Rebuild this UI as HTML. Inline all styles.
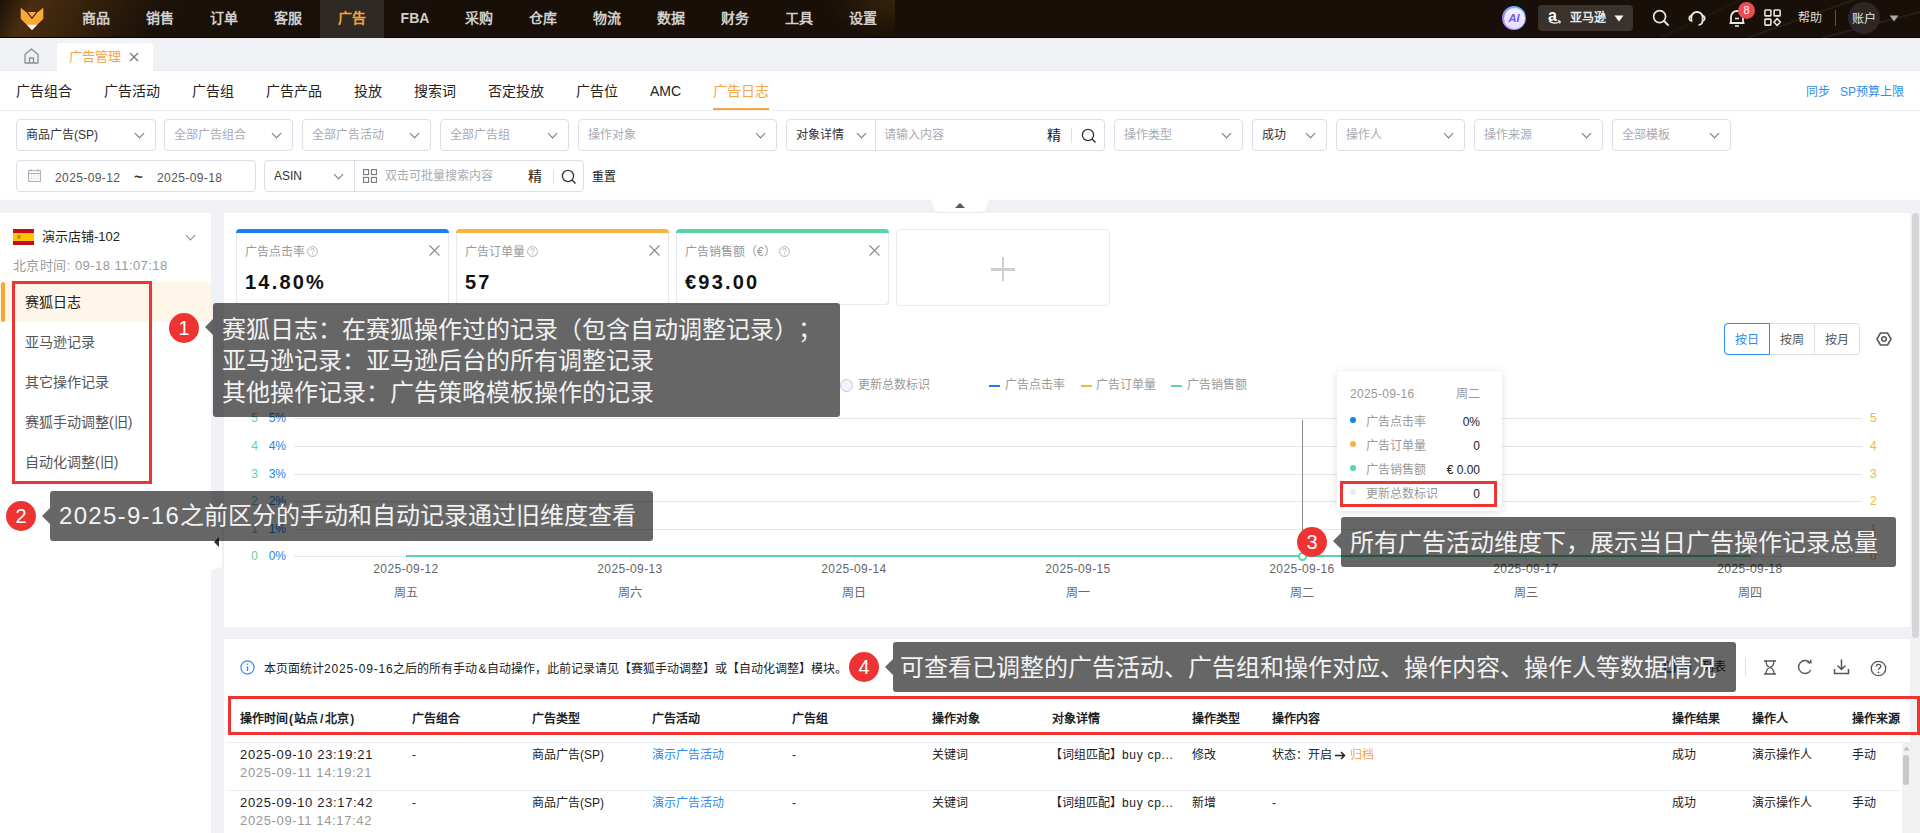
<!DOCTYPE html>
<html lang="zh-CN"><head><meta charset="utf-8">
<style>
*{margin:0;padding:0;box-sizing:border-box}
html,body{text-spacing-trim:space-all;width:1920px;height:833px;overflow:hidden;background:#f0f1f5;font-family:"Liberation Sans",sans-serif;color:#333}
.a{position:absolute}
.t{position:absolute;white-space:nowrap;line-height:20px}
#nav{left:0;top:0;width:1920px;height:38px;border-bottom:1px solid #050302;background:radial-gradient(ellipse 70px 40px at 895px 0px,rgba(80,50,15,0.55),rgba(80,50,15,0) 100%) no-repeat 0 0/895px 38px,linear-gradient(115deg,#1b1209 0px,#4a2e10 30px,#3a240c 70px,#1a1109 150px,#170f08 400px)}
#nav .it{position:absolute;top:0;height:38px;width:64px;line-height:36px;text-align:center;color:#cfcfcf;font-size:14px;font-weight:bold}
#tabs{left:0;top:38px;width:1920px;height:33px;background:#f0f1f5}
#sub{left:0;top:71px;width:1920px;height:40px;background:#fff;border-bottom:1px solid #eceef2}
#sub .t{top:81px;font-size:14px;color:#222}
#filt{left:0;top:111px;width:1920px;height:89px;background:#fff}
.box{position:absolute;height:32px;border:1px solid #dcdfe6;border-radius:4px;background:#fff}
.box .ph{position:absolute;left:9px;top:6px;font-size:12px;line-height:18px;color:#a8abb2;white-space:nowrap}
.box .val{color:#303133}
.chev{position:absolute;width:7px;height:7px;border-right:1.2px solid #777;border-bottom:1.2px solid #777;transform:rotate(45deg)}
</style></head><body>
<!-- NAV -->
<div id="nav" class="a">
  <svg class="a" style="left:1600px;top:0" width="320" height="38" viewBox="0 0 320 38"><path d="M147 38L254 0" stroke="rgba(255,240,220,0.07)" stroke-width="2"/><path d="M222 38L320 12" stroke="rgba(255,240,220,0.07)" stroke-width="2"/><path d="M60 38L140 0" stroke="rgba(255,240,220,0.03)" stroke-width="3"/></svg>
  <svg class="a" style="left:20px;top:7px" width="25" height="25" viewBox="0 0 25 25">
    <polygon points="0.7,0.8 6,5 18,5 23.3,0.8 23.3,11.8 12,23 0.7,11.8" fill="#f8a93a"/>
    <polyline points="7,4.9 12,11.3 17,4.9" fill="none" stroke="#3a2410" stroke-width="1.2"/>
    <polygon points="6.8,17.8 17.2,17.8 12,23" fill="#fff"/>
  </svg>
  <div class="it" style="left:64px">商品</div>
  <div class="it" style="left:128px">销售</div>
  <div class="it" style="left:192px">订单</div>
  <div class="it" style="left:256px">客服</div>
  <div class="it" style="left:320px;background:#2f2924;color:#f5a33c">广告</div>
  <div class="it" style="left:383px;font-weight:bold">FBA</div>
  <div class="it" style="left:447px">采购</div>
  <div class="it" style="left:511px">仓库</div>
  <div class="it" style="left:575px">物流</div>
  <div class="it" style="left:639px">数据</div>
  <div class="it" style="left:703px">财务</div>
  <div class="it" style="left:767px">工具</div>
  <div class="it" style="left:831px">设置</div>
</div>
<!-- TABS -->
<div id="tabs" class="a">
  <svg class="a" style="left:24px;top:10px" width="15" height="16" viewBox="0 0 15 16"><path d="M1 15V6.5L7.5 1L14 6.5V15H1Z M5.5 15V10H9.5V15" fill="none" stroke="#8a8f99" stroke-width="1.3" stroke-linejoin="round"/></svg>
  <div class="a" style="left:0;top:32px;width:1920px;height:1px;background:#e6e8ec"></div><div class="a" style="left:57px;top:5px;width:96px;height:28px;background:#fff;border-radius:4px 4px 0 0"></div>
  <div class="t" style="left:69px;top:9px;font-size:13px;color:#f5a445">广告管理</div>
  <svg class="a" style="left:129px;top:14px" width="10" height="10" viewBox="0 0 10 10"><path d="M1 1L9 9M9 1L1 9" stroke="#777" stroke-width="1.2"/></svg>
</div>
<!-- SUBNAV -->
<div id="sub" class="a"></div>
<div class="t" style="left:16px;top:81px;font-size:14px;color:#222">广告组合</div>
<div class="t" style="left:104px;top:81px;font-size:14px;color:#222">广告活动</div>
<div class="t" style="left:192px;top:81px;font-size:14px;color:#222">广告组</div>
<div class="t" style="left:266px;top:81px;font-size:14px;color:#222">广告产品</div>
<div class="t" style="left:354px;top:81px;font-size:14px;color:#222">投放</div>
<div class="t" style="left:414px;top:81px;font-size:14px;color:#222">搜索词</div>
<div class="t" style="left:488px;top:81px;font-size:14px;color:#222">否定投放</div>
<div class="t" style="left:576px;top:81px;font-size:14px;color:#222">广告位</div>
<div class="t" style="left:650px;top:81px;font-size:14px;color:#222">AMC</div>
<div class="t" style="left:713px;top:81px;font-size:14px;color:#f5a445">广告日志</div>
<div class="a" style="left:713px;top:108px;width:56px;height:2px;background:#f5a445"></div>
<div class="t" style="left:1806px;top:82px;font-size:12px;color:#2d8cf0">同步</div>
<div class="t" style="left:1840px;top:82px;font-size:12px;color:#2d8cf0">SP预算上限</div>
<!-- FILTERS -->
<div id="filt" class="a"></div>
<div class="box" style="left:16px;top:119px;width:140px"><div class="ph val">商品广告(SP)</div><div class="chev" style="right:12px;top:10px"></div></div>
<div class="box" style="left:164px;top:119px;width:129px"><div class="ph">全部广告组合</div><div class="chev" style="right:12px;top:10px"></div></div>
<div class="box" style="left:302px;top:119px;width:129px"><div class="ph">全部广告活动</div><div class="chev" style="right:12px;top:10px"></div></div>
<div class="box" style="left:440px;top:119px;width:129px"><div class="ph">全部广告组</div><div class="chev" style="right:12px;top:10px"></div></div>
<div class="box" style="left:578px;top:119px;width:199px"><div class="ph">操作对象</div><div class="chev" style="right:12px;top:10px"></div></div>
<div class="box" style="left:786px;top:119px;width:319px"><div class="ph val">对象详情</div><div class="chev" style="left:71px;top:10px"></div><div class="a" style="left:88px;top:0;width:1px;height:30px;background:#dcdfe6"></div><div class="ph" style="left:97px">请输入内容</div><div class="ph val" style="left:260px;font-size:14px;font-weight:500;color:#222">精</div><div class="a" style="left:284px;top:8px;width:1px;height:15px;background:#dcdfe6"></div><svg class="a" style="left:294px;top:8px" width="16" height="16" viewBox="0 0 16 16"><circle cx="7" cy="7" r="5.6" fill="none" stroke="#333" stroke-width="1.3"/><path d="M11 11L14.5 14.5" stroke="#333" stroke-width="1.4"/></svg></div>
<div class="box" style="left:1114px;top:119px;width:129px"><div class="ph">操作类型</div><div class="chev" style="right:12px;top:10px"></div></div>
<div class="box" style="left:1252px;top:119px;width:75px"><div class="ph val">成功</div><div class="chev" style="right:12px;top:10px"></div></div>
<div class="box" style="left:1336px;top:119px;width:129px"><div class="ph">操作人</div><div class="chev" style="right:12px;top:10px"></div></div>
<div class="box" style="left:1474px;top:119px;width:129px"><div class="ph">操作来源</div><div class="chev" style="right:12px;top:10px"></div></div>
<div class="box" style="left:1612px;top:119px;width:119px"><div class="ph">全部模板</div><div class="chev" style="right:12px;top:10px"></div></div>
<div class="box" style="left:16px;top:160px;width:240px"><svg class="a" style="left:11px;top:8px" width="13" height="13" viewBox="0 0 13 13"><rect x="0.6" y="1.6" width="11.8" height="10.8" fill="none" stroke="#a8abb2" stroke-width="1"/><path d="M0.6 4.5H12.4" stroke="#a8abb2"/><path d="M3 0V2.5M10 0V2.5" stroke="#a8abb2"/><path d="M3 7h1.5M6 7h1.5M9 7h1.5M3 9.5h1.5M6 9.5h1.5M9 9.5h1.5" stroke="#c0c3c9" stroke-width="0.9"/></svg><div class="ph val" style="left:38px;top:8px;color:#555;letter-spacing:0.4px">2025-09-12</div><div class="ph val" style="left:117px;top:7px;color:#333;font-size:15px;font-weight:bold">~</div><div class="ph val" style="left:140px;top:8px;color:#555;letter-spacing:0.4px">2025-09-18</div></div>
<div class="box" style="left:264px;top:160px;width:320px"><div class="ph val" style="left:9px">ASIN</div><div class="chev" style="left:70px;top:10px"></div><div class="a" style="left:89px;top:0;width:1px;height:30px;background:#dcdfe6"></div><svg class="a" style="left:98px;top:8px" width="14" height="14" viewBox="0 0 14 14"><rect x="0.6" y="0.6" width="5" height="5" fill="none" stroke="#777" stroke-width="1.1"/><rect x="8.4" y="0.6" width="5" height="5" fill="none" stroke="#777" stroke-width="1.1"/><rect x="0.6" y="8.4" width="5" height="5" fill="none" stroke="#777" stroke-width="1.1"/><rect x="8.4" y="8.4" width="5" height="5" fill="none" stroke="#777" stroke-width="1.1"/></svg><div class="ph" style="left:120px">双击可批量搜索内容</div><div class="ph val" style="left:263px;font-size:14px;font-weight:500;color:#222">精</div><div class="a" style="left:288px;top:8px;width:1px;height:15px;background:#dcdfe6"></div><svg class="a" style="left:296px;top:8px" width="16" height="16" viewBox="0 0 16 16"><circle cx="7" cy="7" r="5.6" fill="none" stroke="#333" stroke-width="1.3"/><path d="M11 11L14.5 14.5" stroke="#333" stroke-width="1.4"/></svg></div>
<div class="t" style="left:592px;top:167px;font-size:12px;color:#222">重置</div>
<svg class="a" style="left:928px;top:199px" width="64" height="14" viewBox="0 0 64 14"><path d="M0 1H2.5L7 11Q8 13 10 13H54Q56 13 57 11L61.5 1H64" fill="#fff" stroke="#e6e8ec" stroke-width="1"/><path d="M2 0H62L57 11Q56 12.5 54 12.5H10Q8 12.5 7 11Z" fill="#fff"/><path d="M27 9L32 4L37 9Z" fill="#555"/></svg>
<div class="a" style="left:0;top:213px;width:211px;height:620px;background:#fff"></div>
<svg class="a" style="left:13px;top:229px" width="21" height="16" viewBox="0 0 21 16"><rect width="21" height="16" fill="#c60b1e"/><rect y="4" width="21" height="8" fill="#ffc400"/><rect x="4.5" y="6" width="3" height="4" fill="#b5651d" opacity="0.7"/></svg>
<div class="t" style="left:42px;top:227px;font-size:13px;color:#222">演示店铺-102</div>
<div class="chev" style="left:187px;top:232px;border-color:#888"></div>
<div class="t" style="left:13px;top:256px;font-size:13px;letter-spacing:0.45px;color:#999">北京时间: 09-18 11:07:18</div>
<div class="a" style="left:0;top:282px;width:211px;height:40px;background:#fff6ea;border-radius:0 4px 4px 0"></div>
<div class="a" style="left:1px;top:282px;width:4px;height:40px;background:#f7a735;border-radius:2px"></div>
<div class="t" style="left:25px;top:292px;font-size:14px;color:#222">赛狐日志</div>
<div class="t" style="left:25px;top:332px;font-size:14px;color:#555">亚马逊记录</div>
<div class="t" style="left:25px;top:372px;font-size:14px;color:#555">其它操作记录</div>
<div class="t" style="left:25px;top:412px;font-size:14px;color:#555">赛狐手动调整(旧)</div>
<div class="t" style="left:25px;top:452px;font-size:14px;color:#555">自动化调整(旧)</div>
<div class="a" style="left:12px;top:281px;width:140px;height:203px;border:3px solid #ee3333"></div>
<svg class="a" style="left:210px;top:515px" width="14" height="56" viewBox="0 0 14 56"><path d="M0 0H12V49Q12 52 9 53L1 55H0Z" fill="#fff"/><path d="M9 22L4 27L9 32Z" fill="#333"/></svg>
<div class="a" style="left:224px;top:213px;width:1686px;height:414px;background:#fff"></div>
<div class="a" style="left:236px;top:229px;width:213px;height:76px;border:1px solid #e8eaee;border-top:none;border-radius:4px;background:#fff"></div><div class="a" style="left:236px;top:229px;width:213px;height:4px;background:#1b7ff3;border-radius:4px 4px 0 0"></div><div class="t" style="left:245px;top:242px;font-size:12px;color:#999">广告点击率</div><svg class="a" style="left:307px;top:246px" width="11" height="11" viewBox="0 0 11 11"><circle cx="5.5" cy="5.5" r="4.9" fill="none" stroke="#aaa" stroke-width="0.9"/><path d="M3.8 4.3Q3.8 2.6 5.5 2.6Q7.2 2.6 7.2 4.1Q7.2 5 6.1 5.5Q5.5 5.8 5.5 6.7" fill="none" stroke="#aaa" stroke-width="0.9"/><circle cx="5.5" cy="8.3" r="0.6" fill="#aaa"/></svg><svg class="a" style="left:429px;top:245px" width="11" height="11" viewBox="0 0 11 11"><path d="M0.5 0.5L10.5 10.5M10.5 0.5L0.5 10.5" stroke="#888" stroke-width="1.1"/></svg><div class="t" style="left:245px;top:272px;font-size:20px;font-weight:bold;color:#111;letter-spacing:2.2px">14.80%</div>
<div class="a" style="left:456px;top:229px;width:213px;height:76px;border:1px solid #e8eaee;border-top:none;border-radius:4px;background:#fff"></div><div class="a" style="left:456px;top:229px;width:213px;height:4px;background:#f5b53f;border-radius:4px 4px 0 0"></div><div class="t" style="left:465px;top:242px;font-size:12px;color:#999">广告订单量</div><svg class="a" style="left:527px;top:246px" width="11" height="11" viewBox="0 0 11 11"><circle cx="5.5" cy="5.5" r="4.9" fill="none" stroke="#aaa" stroke-width="0.9"/><path d="M3.8 4.3Q3.8 2.6 5.5 2.6Q7.2 2.6 7.2 4.1Q7.2 5 6.1 5.5Q5.5 5.8 5.5 6.7" fill="none" stroke="#aaa" stroke-width="0.9"/><circle cx="5.5" cy="8.3" r="0.6" fill="#aaa"/></svg><svg class="a" style="left:649px;top:245px" width="11" height="11" viewBox="0 0 11 11"><path d="M0.5 0.5L10.5 10.5M10.5 0.5L0.5 10.5" stroke="#888" stroke-width="1.1"/></svg><div class="t" style="left:465px;top:272px;font-size:20px;font-weight:bold;color:#111;letter-spacing:2.2px">57</div>
<div class="a" style="left:676px;top:229px;width:213px;height:76px;border:1px solid #e8eaee;border-top:none;border-radius:4px;background:#fff"></div><div class="a" style="left:676px;top:229px;width:213px;height:4px;background:#58d5a0;border-radius:4px 4px 0 0"></div><div class="t" style="left:685px;top:242px;font-size:12px;color:#999">广告销售额（€）</div><svg class="a" style="left:779px;top:246px" width="11" height="11" viewBox="0 0 11 11"><circle cx="5.5" cy="5.5" r="4.9" fill="none" stroke="#aaa" stroke-width="0.9"/><path d="M3.8 4.3Q3.8 2.6 5.5 2.6Q7.2 2.6 7.2 4.1Q7.2 5 6.1 5.5Q5.5 5.8 5.5 6.7" fill="none" stroke="#aaa" stroke-width="0.9"/><circle cx="5.5" cy="8.3" r="0.6" fill="#aaa"/></svg><svg class="a" style="left:869px;top:245px" width="11" height="11" viewBox="0 0 11 11"><path d="M0.5 0.5L10.5 10.5M10.5 0.5L0.5 10.5" stroke="#888" stroke-width="1.1"/></svg><div class="t" style="left:685px;top:272px;font-size:20px;font-weight:bold;color:#111;letter-spacing:2.2px">€93.00</div>
<div class="a" style="left:896px;top:229px;width:214px;height:77px;border:1px solid #e8eaee;border-radius:4px"></div><div class="a" style="left:991px;top:268px;width:24px;height:2.5px;background:#cfcfcf"></div><div class="a" style="left:1001.75px;top:257.25px;width:2.5px;height:24px;background:#cfcfcf"></div>
<div class="a" style="left:1724px;top:323px;width:136px;height:32px;border:1px solid #dcdfe6;border-radius:4px"></div>
<div class="a" style="left:1769px;top:323px;width:1px;height:32px;background:#dcdfe6"></div>
<div class="a" style="left:1814px;top:323px;width:1px;height:32px;background:#dcdfe6"></div>
<div class="a" style="left:1724px;top:323px;width:46px;height:32px;border:1px solid #2d8cf0;border-radius:4px 0 0 4px"></div>
<div class="t" style="left:1735px;top:330px;font-size:12px;color:#2d8cf0">按日</div>
<div class="t" style="left:1780px;top:330px;font-size:12px;color:#555">按周</div>
<div class="t" style="left:1825px;top:330px;font-size:12px;color:#555">按月</div>
<svg class="a" style="left:1876px;top:332px" width="16" height="14" viewBox="0 0 16 14"><path d="M4.5 1H11.5L15 7L11.5 13H4.5L1 7Z" fill="none" stroke="#555" stroke-width="1.5" stroke-linejoin="round"/><circle cx="8" cy="7" r="2.3" fill="none" stroke="#555" stroke-width="1.5"/></svg>
<div class="a" style="left:840px;top:379px;width:13px;height:13px;border-radius:50%;border:1px solid #c8c4ea;background:#f3f2fc"></div>
<div class="t" style="left:858px;top:375px;font-size:12px;color:#999">更新总数标识</div>
<div class="a" style="left:989px;top:385px;width:11px;height:2px;background:#1b7ff3"></div>
<div class="t" style="left:1005px;top:375px;font-size:12px;color:#999">广告点击率</div>
<div class="a" style="left:1081px;top:385px;width:11px;height:2px;background:#f5b53f"></div>
<div class="t" style="left:1096px;top:375px;font-size:12px;color:#999">广告订单量</div>
<div class="a" style="left:1171px;top:385px;width:11px;height:2px;background:#58d5a0"></div>
<div class="t" style="left:1187px;top:375px;font-size:12px;color:#999">广告销售额</div>
<div class="a" style="left:294px;top:418px;width:1568px;height:1px;background:#e4e7ed"></div><div class="t" style="left:248px;top:408px;width:10px;text-align:right;font-size:12px;color:#58d5a0">5</div><div class="t" style="left:262px;top:408px;width:24px;text-align:right;font-size:12px;color:#1b7ff3">5%</div><div class="t" style="left:1870px;top:408px;font-size:12px;color:#f5b53f">5</div>
<div class="a" style="left:294px;top:446px;width:1568px;height:1px;background:#e4e7ed"></div><div class="t" style="left:248px;top:436px;width:10px;text-align:right;font-size:12px;color:#58d5a0">4</div><div class="t" style="left:262px;top:436px;width:24px;text-align:right;font-size:12px;color:#1b7ff3">4%</div><div class="t" style="left:1870px;top:436px;font-size:12px;color:#f5b53f">4</div>
<div class="a" style="left:294px;top:474px;width:1568px;height:1px;background:#e4e7ed"></div><div class="t" style="left:248px;top:464px;width:10px;text-align:right;font-size:12px;color:#58d5a0">3</div><div class="t" style="left:262px;top:464px;width:24px;text-align:right;font-size:12px;color:#1b7ff3">3%</div><div class="t" style="left:1870px;top:464px;font-size:12px;color:#f5b53f">3</div>
<div class="a" style="left:294px;top:501px;width:1568px;height:1px;background:#e4e7ed"></div><div class="t" style="left:248px;top:491px;width:10px;text-align:right;font-size:12px;color:#58d5a0">2</div><div class="t" style="left:262px;top:491px;width:24px;text-align:right;font-size:12px;color:#1b7ff3">2%</div><div class="t" style="left:1870px;top:491px;font-size:12px;color:#f5b53f">2</div>
<div class="a" style="left:294px;top:529px;width:1568px;height:1px;background:#e4e7ed"></div><div class="t" style="left:248px;top:519px;width:10px;text-align:right;font-size:12px;color:#58d5a0">1</div><div class="t" style="left:262px;top:519px;width:24px;text-align:right;font-size:12px;color:#1b7ff3">1%</div><div class="t" style="left:1870px;top:519px;font-size:12px;color:#f5b53f">1</div>
<div class="a" style="left:294px;top:556px;width:1568px;height:1px;background:#e4e7ed"></div><div class="t" style="left:248px;top:546px;width:10px;text-align:right;font-size:12px;color:#58d5a0">0</div><div class="t" style="left:262px;top:546px;width:24px;text-align:right;font-size:12px;color:#1b7ff3">0%</div><div class="t" style="left:1870px;top:546px;font-size:12px;color:#f5b53f">0</div>
<div class="a" style="left:406px;top:556px;width:1px;height:6px;background:#e4e7ed"></div><div class="t" style="left:356px;top:559px;width:100px;text-align:center;font-size:12px;letter-spacing:0.4px;color:#666">2025-09-12</div><div class="t" style="left:356px;top:583px;width:100px;text-align:center;font-size:12px;color:#666">周五</div>
<div class="a" style="left:630px;top:556px;width:1px;height:6px;background:#e4e7ed"></div><div class="t" style="left:580px;top:559px;width:100px;text-align:center;font-size:12px;letter-spacing:0.4px;color:#666">2025-09-13</div><div class="t" style="left:580px;top:583px;width:100px;text-align:center;font-size:12px;color:#666">周六</div>
<div class="a" style="left:854px;top:556px;width:1px;height:6px;background:#e4e7ed"></div><div class="t" style="left:804px;top:559px;width:100px;text-align:center;font-size:12px;letter-spacing:0.4px;color:#666">2025-09-14</div><div class="t" style="left:804px;top:583px;width:100px;text-align:center;font-size:12px;color:#666">周日</div>
<div class="a" style="left:1078px;top:556px;width:1px;height:6px;background:#e4e7ed"></div><div class="t" style="left:1028px;top:559px;width:100px;text-align:center;font-size:12px;letter-spacing:0.4px;color:#666">2025-09-15</div><div class="t" style="left:1028px;top:583px;width:100px;text-align:center;font-size:12px;color:#666">周一</div>
<div class="a" style="left:1302px;top:556px;width:1px;height:6px;background:#e4e7ed"></div><div class="t" style="left:1252px;top:559px;width:100px;text-align:center;font-size:12px;letter-spacing:0.4px;color:#666">2025-09-16</div><div class="t" style="left:1252px;top:583px;width:100px;text-align:center;font-size:12px;color:#666">周二</div>
<div class="a" style="left:1526px;top:556px;width:1px;height:6px;background:#e4e7ed"></div><div class="t" style="left:1476px;top:559px;width:100px;text-align:center;font-size:12px;letter-spacing:0.4px;color:#666">2025-09-17</div><div class="t" style="left:1476px;top:583px;width:100px;text-align:center;font-size:12px;color:#666">周三</div>
<div class="a" style="left:1750px;top:556px;width:1px;height:6px;background:#e4e7ed"></div><div class="t" style="left:1700px;top:559px;width:100px;text-align:center;font-size:12px;letter-spacing:0.4px;color:#666">2025-09-18</div><div class="t" style="left:1700px;top:583px;width:100px;text-align:center;font-size:12px;color:#666">周四</div>
<div class="a" style="left:406px;top:555px;width:1344px;height:2px;background:#58d5a0"></div>
<div class="a" style="left:1302px;top:420px;width:1px;height:134px;background:#888"></div>
<div class="a" style="left:1297.5px;top:551.5px;width:9px;height:9px;border-radius:50%;border:2px solid #5bd9a5;background:#fff"></div>
<div class="a" style="left:1502px;top:6px;width:24px;height:24px;border-radius:50%;background:linear-gradient(200deg,#4fd6ff,#9a7cff 55%,#c89cff);padding:1.5px"><div style="width:21px;height:21px;border-radius:50%;background:linear-gradient(180deg,#f4f0ff,#e6dcff);color:#6a58f0;font-size:11px;font-weight:bold;font-style:italic;text-align:center;line-height:21px">AI</div></div>
<div class="a" style="left:1538px;top:5px;width:95px;height:26px;border-radius:4px;background:#3a332d"></div>
<div class="t" style="left:1548px;top:6px;font-size:16px;font-weight:bold;color:#fff">a</div>
<svg class="a" style="left:1548px;top:20px" width="13" height="6" viewBox="0 0 13 6"><path d="M1 1Q6.5 5 12 1.5" fill="none" stroke="#fff" stroke-width="1.3"/><path d="M10 0.5L12.3 1.3L11.8 3.6" fill="none" stroke="#fff" stroke-width="1"/></svg>
<div class="t" style="left:1570px;top:8px;font-size:12px;font-weight:bold;color:#e8e8e8">亚马逊</div>
<svg class="a" style="left:1614px;top:15px" width="10" height="7" viewBox="0 0 10 7"><path d="M0.5 0.5H9.5L5 6.5Z" fill="#fff"/></svg>
<svg class="a" style="left:1652px;top:9px" width="18" height="18" viewBox="0 0 18 18"><circle cx="7.6" cy="7.6" r="6" fill="none" stroke="#e6e6e6" stroke-width="1.7"/><path d="M12 12L16 16" stroke="#e6e6e6" stroke-width="1.9" stroke-linecap="round"/></svg>
<svg class="a" style="left:1687px;top:6.5px" width="20" height="20" viewBox="0 0 20 20"><path d="M4 11A6 6 0 0 1 16 11" fill="none" stroke="#e6e6e6" stroke-width="1.8"/><path d="M4.5 8.5A2.8 2.8 0 0 0 4.5 14Z" fill="none" stroke="#e6e6e6" stroke-width="1.6"/><path d="M15.5 8.5A2.8 2.8 0 0 1 15.5 14Z" fill="none" stroke="#e6e6e6" stroke-width="1.6"/><path d="M15.5 14Q15.5 17.5 11.5 18" fill="none" stroke="#e6e6e6" stroke-width="1.7"/></svg>
<svg class="a" style="left:1728px;top:7px" width="20" height="22" viewBox="0 0 20 22"><path d="M3 16V10A6 6 0 0 1 15 10V16Z M1.5 16.2H16.5" fill="none" stroke="#e6e6e6" stroke-width="1.8" stroke-linejoin="round"/><path d="M7 19H11" stroke="#e6e6e6" stroke-width="1.6"/><path d="M7 11.5H11" stroke="#e6e6e6" stroke-width="1.6"/></svg>
<div class="a" style="left:1738px;top:1.5px;width:17px;height:17px;border-radius:50%;background:#f04a55;color:#fff;font-size:11px;text-align:center;line-height:17px">8</div>
<svg class="a" style="left:1764px;top:8.5px;transform:scale(0.92);transform-origin:0 0" width="19" height="19" viewBox="0 0 19 19"><rect x="1" y="1" width="6.5" height="6.5" rx="0.8" fill="none" stroke="#e6e6e6" stroke-width="1.7"/><rect x="11" y="1" width="6.5" height="6.5" rx="0.8" fill="none" stroke="#e6e6e6" stroke-width="1.7"/><rect x="1" y="11" width="6.5" height="6.5" rx="0.8" fill="none" stroke="#e6e6e6" stroke-width="1.7"/><path d="M14.3 10.5L17.8 14.2L14.3 17.9L10.8 14.2Z" fill="none" stroke="#e6e6e6" stroke-width="1.7" stroke-linejoin="round"/></svg>
<div class="t" style="left:1798px;top:8px;font-size:12px;font-weight:500;color:#dcdcdc">帮助</div>
<div class="a" style="left:1835px;top:10px;width:1px;height:16px;background:#555"></div>
<div class="a" style="left:1848px;top:2px;width:32px;height:32px;border-radius:50%;background:#2c2724"></div>
<div class="t" style="left:1852px;top:9px;font-size:12px;font-weight:500;color:#e8e8e8">账户</div>
<svg class="a" style="left:1889px;top:14.5px" width="10" height="7" viewBox="0 0 10 7"><path d="M0.5 0.5H9.5L5 6.5Z" fill="#aaa"/></svg>
<div class="a" style="left:224px;top:639px;width:1686px;height:194px;background:#fff"></div>
<svg class="a" style="left:240px;top:660px" width="15" height="15" viewBox="0 0 15 15"><circle cx="7.5" cy="7.5" r="6.6" fill="none" stroke="#2d8cf0" stroke-width="1.2"/><path d="M7.5 6.3V11" stroke="#2d8cf0" stroke-width="1.4"/><circle cx="7.5" cy="4.2" r="0.8" fill="#2d8cf0"/></svg>
<div class="t" style="left:264px;top:659px;font-size:12px;color:#222">本页面统计<span style="letter-spacing:0.8px">2025-09-16</span>之后的所有手动<span style="margin:0 1px">&amp;</span>自动操作，此前记录请见【赛狐手动调整】或【自动化调整】模块。</div>
<div class="a" style="left:1664px;top:661px;width:12px;height:12px;border:2px solid #2d8cf0;border-radius:2px"></div><div class="t" style="left:1680px;top:657px;font-size:12px;color:#2d8cf0">图</div><div class="t" style="left:1702px;top:657px;font-size:12px;color:#333">列表</div>
<div class="a" style="left:1745px;top:658px;width:1px;height:18px;background:#e0e0e0"></div>
<svg class="a" style="left:1763px;top:660px" width="14" height="15" viewBox="0 0 14 15"><path d="M1 1H13M1 14H13M3 1Q3 6 7 7.5Q11 9 11 14M11 1Q11 6 7 7.5Q3 9 3 14" fill="none" stroke="#555" stroke-width="1.3"/></svg>
<svg class="a" style="left:1797px;top:659px" width="16" height="16" viewBox="0 0 16 16"><path d="M13.2 4A6.5 6.5 0 1 0 13.8 11" fill="none" stroke="#555" stroke-width="1.4"/><path d="M10.5 3.6L14 3.8L13.6 0.6" fill="none" stroke="#555" stroke-width="1.3"/></svg>
<svg class="a" style="left:1833px;top:658px" width="17" height="17" viewBox="0 0 17 17"><path d="M8.5 1.5V11M4.5 7.5L8.5 11.5L12.5 7.5M1.5 11V15.5H15.5V11" fill="none" stroke="#555" stroke-width="1.5"/></svg>
<svg class="a" style="left:1870px;top:660px" width="17" height="17" viewBox="0 0 17 17"><circle cx="8.5" cy="8.5" r="7.2" fill="none" stroke="#555" stroke-width="1.3"/><path d="M6.2 6.6Q6.2 4.3 8.5 4.3Q10.8 4.3 10.8 6.3Q10.8 7.5 9.4 8.2Q8.5 8.7 8.5 10" fill="none" stroke="#555" stroke-width="1.3"/><circle cx="8.5" cy="12.3" r="0.9" fill="#555"/></svg>
<div class="a" style="left:226px;top:698px;width:1684px;height:45px;background:#fff;border-bottom:1px solid #ebeef5"></div>
<div class="t" style="left:240px;top:709px;font-size:12px;font-weight:bold;color:#222">操作时间<span style="margin:0 1px">(</span>站点<span style="margin:0 2px">/</span>北京<span style="margin:0 1px">)</span></div>
<div class="t" style="left:412px;top:709px;font-size:12px;font-weight:bold;color:#222">广告组合</div>
<div class="t" style="left:532px;top:709px;font-size:12px;font-weight:bold;color:#222">广告类型</div>
<div class="t" style="left:652px;top:709px;font-size:12px;font-weight:bold;color:#222">广告活动</div>
<div class="t" style="left:792px;top:709px;font-size:12px;font-weight:bold;color:#222">广告组</div>
<div class="t" style="left:932px;top:709px;font-size:12px;font-weight:bold;color:#222">操作对象</div>
<div class="t" style="left:1052px;top:709px;font-size:12px;font-weight:bold;color:#222">对象详情</div>
<div class="t" style="left:1192px;top:709px;font-size:12px;font-weight:bold;color:#222">操作类型</div>
<div class="t" style="left:1272px;top:709px;font-size:12px;font-weight:bold;color:#222">操作内容</div>
<div class="t" style="left:1672px;top:709px;font-size:12px;font-weight:bold;color:#222">操作结果</div>
<div class="t" style="left:1752px;top:709px;font-size:12px;font-weight:bold;color:#222">操作人</div>
<div class="t" style="left:1852px;top:709px;font-size:12px;font-weight:bold;color:#222">操作来源</div>
<div class="t" style="left:240px;top:745px;font-size:13px;letter-spacing:0.65px;color:#222">2025-09-10 23:19:21</div><div class="t" style="left:240px;top:763px;font-size:13px;letter-spacing:0.65px;color:#999">2025-09-11 14:19:21</div><div class="t" style="left:412px;top:745px;font-size:12px;color:#222">-</div><div class="t" style="left:532px;top:745px;font-size:12px;color:#222">商品广告(SP)</div><div class="t" style="left:652px;top:745px;font-size:12px;color:#2d8cf0">演示广告活动</div><div class="t" style="left:792px;top:745px;font-size:12px;color:#222">-</div><div class="t" style="left:932px;top:745px;font-size:12px;color:#222">关键词</div><div class="t" style="left:1050px;top:745px;font-size:12px;color:#222">【词组匹配】<span style="letter-spacing:0.7px">buy cp...</span></div><div class="t" style="left:1192px;top:745px;font-size:12px;color:#222">修改</div><div class="t" style="left:1672px;top:745px;font-size:12px;color:#222">成功</div><div class="t" style="left:1752px;top:745px;font-size:12px;color:#222">演示操作人</div><div class="t" style="left:1852px;top:745px;font-size:12px;color:#222">手动</div>
<div class="t" style="left:240px;top:793px;font-size:13px;letter-spacing:0.65px;color:#222">2025-09-10 23:17:42</div><div class="t" style="left:240px;top:811px;font-size:13px;letter-spacing:0.65px;color:#999">2025-09-11 14:17:42</div><div class="t" style="left:412px;top:793px;font-size:12px;color:#222">-</div><div class="t" style="left:532px;top:793px;font-size:12px;color:#222">商品广告(SP)</div><div class="t" style="left:652px;top:793px;font-size:12px;color:#2d8cf0">演示广告活动</div><div class="t" style="left:792px;top:793px;font-size:12px;color:#222">-</div><div class="t" style="left:932px;top:793px;font-size:12px;color:#222">关键词</div><div class="t" style="left:1050px;top:793px;font-size:12px;color:#222">【词组匹配】<span style="letter-spacing:0.7px">buy cp...</span></div><div class="t" style="left:1192px;top:793px;font-size:12px;color:#222">新增</div><div class="t" style="left:1672px;top:793px;font-size:12px;color:#222">成功</div><div class="t" style="left:1752px;top:793px;font-size:12px;color:#222">演示操作人</div><div class="t" style="left:1852px;top:793px;font-size:12px;color:#222">手动</div>
<div class="t" style="left:1272px;top:745px;font-size:12px;color:#222">状态：开启 <svg width="11" height="9" viewBox="0 0 11 9" style="vertical-align:-1px"><path d="M0 4.5H9M6 1L9.5 4.5L6 8" fill="none" stroke="#222" stroke-width="1.5"/></svg> <span style="color:#f5a445">归档</span></div>
<div class="t" style="left:1272px;top:793px;font-size:12px;color:#222">-</div>
<div class="a" style="left:228px;top:790px;width:1674px;height:1px;background:#ebeef5"></div>
<div class="a" style="left:1902px;top:743px;width:9px;height:90px;background:#f1f1f1"></div><svg class="a" style="left:1903px;top:746px" width="7" height="5" viewBox="0 0 7 5"><path d="M0.5 4.5L3.5 0.5L6.5 4.5Z" fill="#bbb"/></svg><div class="a" style="left:1903px;top:755px;width:6px;height:30px;border-radius:3px;background:#c8c8c8"></div>
<div class="a" style="left:1911px;top:213px;width:9px;height:620px;background:#f1f1f3"></div><div class="a" style="left:1912px;top:213px;width:7px;height:425px;border-radius:4px;background:#d6d6d8"></div>
<div class="a" style="left:1337px;top:371px;width:165px;height:140px;background:#fff;border-radius:4px;box-shadow:0 1px 8px rgba(0,0,0,0.13)"></div>
<div class="t" style="left:1350px;top:384px;font-size:12px;letter-spacing:0.3px;color:#999">2025-09-16</div>
<div class="t" style="left:1420px;top:384px;width:60px;text-align:right;font-size:12px;color:#999">周二</div>
<div class="a" style="left:1350px;top:417px;width:6px;height:6px;border-radius:50%;background:#1b7ff3"></div><div class="t" style="left:1366px;top:412px;font-size:12px;color:#999">广告点击率</div><div class="t" style="left:1400px;top:412px;width:80px;text-align:right;font-size:12px;color:#222">0%</div>
<div class="a" style="left:1350px;top:441px;width:6px;height:6px;border-radius:50%;background:#f5b53f"></div><div class="t" style="left:1366px;top:436px;font-size:12px;color:#999">广告订单量</div><div class="t" style="left:1400px;top:436px;width:80px;text-align:right;font-size:12px;color:#222">0</div>
<div class="a" style="left:1350px;top:465px;width:6px;height:6px;border-radius:50%;background:#58d5a0"></div><div class="t" style="left:1366px;top:460px;font-size:12px;color:#999">广告销售额</div><div class="t" style="left:1400px;top:460px;width:80px;text-align:right;font-size:12px;color:#222">€ 0.00</div>
<div class="a" style="left:1350px;top:489px;width:6px;height:6px;border-radius:50%;background:#eeeaf8"></div><div class="t" style="left:1366px;top:484px;font-size:12px;color:#999">更新总数标识</div><div class="t" style="left:1400px;top:484px;width:80px;text-align:right;font-size:12px;color:#222">0</div>
<div class="a" style="left:1340px;top:481px;width:157px;height:26px;border:3px solid #ee3333"></div>
<div class="a" style="left:228px;top:696px;width:1692px;height:39px;border:3px solid #ee3333"></div>
<div class="a" style="left:213px;top:303px;width:627px;height:114px;background:rgba(0,0,0,0.6);border-radius:3px"></div><svg class="a" style="left:205px;top:319px" width="8" height="16" viewBox="0 0 8 16"><path d="M8 0L0 8L8 16Z" fill="rgba(0,0,0,0.6)"/></svg><div class="t" style="left:222px;top:314px;font-size:24px;line-height:32px;color:#f2f2f2">赛狐日志：在赛狐操作过的记录（包含自动调整记录）；</div><div class="t" style="left:222px;top:345px;font-size:24px;line-height:32px;color:#f2f2f2">亚马逊记录：亚马逊后台的所有调整记录</div><div class="t" style="left:222px;top:377px;font-size:24px;line-height:32px;color:#f2f2f2">其他操作记录：广告策略模板操作的记录</div>
<div class="a" style="left:169px;top:313px;width:30px;height:30px;border-radius:50%;background:#ee3333;color:#fff;font-size:20px;line-height:30px;text-align:center">1</div>
<div class="a" style="left:50px;top:491px;width:603px;height:50px;background:rgba(0,0,0,0.6);border-radius:3px"></div><svg class="a" style="left:42px;top:508px" width="8" height="16" viewBox="0 0 8 16"><path d="M8 0L0 8L8 16Z" fill="rgba(0,0,0,0.6)"/></svg><div class="t" style="left:59px;top:500px;font-size:24px;line-height:32px;color:#f2f2f2"><span style="letter-spacing:1.3px">2025-9-16</span>之前区分的手动和自动记录通过旧维度查看</div>
<div class="a" style="left:6px;top:501px;width:30px;height:30px;border-radius:50%;background:#ee3333;color:#fff;font-size:20px;line-height:30px;text-align:center">2</div>
<div class="a" style="left:1341px;top:517px;width:555px;height:50px;background:rgba(0,0,0,0.6);border-radius:3px"></div><svg class="a" style="left:1333px;top:533px" width="8" height="16" viewBox="0 0 8 16"><path d="M8 0L0 8L8 16Z" fill="rgba(0,0,0,0.6)"/></svg><div class="t" style="left:1350px;top:527px;font-size:24px;line-height:32px;color:#f2f2f2">所有广告活动维度下，展示当日广告操作记录总量</div>
<div class="a" style="left:1297px;top:527px;width:30px;height:30px;border-radius:50%;background:#ee3333;color:#fff;font-size:20px;line-height:30px;text-align:center">3</div>
<div class="a" style="left:893px;top:642px;width:843px;height:50px;background:rgba(0,0,0,0.6);border-radius:3px"></div><svg class="a" style="left:885px;top:659px" width="8" height="16" viewBox="0 0 8 16"><path d="M8 0L0 8L8 16Z" fill="rgba(0,0,0,0.6)"/></svg><div class="t" style="left:900px;top:652px;font-size:24px;line-height:32px;color:#f2f2f2">可查看已调整的广告活动、广告组和操作对应、操作内容、操作人等数据情况</div>
<div class="a" style="left:849px;top:652px;width:30px;height:30px;border-radius:50%;background:#ee3333;color:#fff;font-size:20px;line-height:30px;text-align:center">4</div>
</body></html>
